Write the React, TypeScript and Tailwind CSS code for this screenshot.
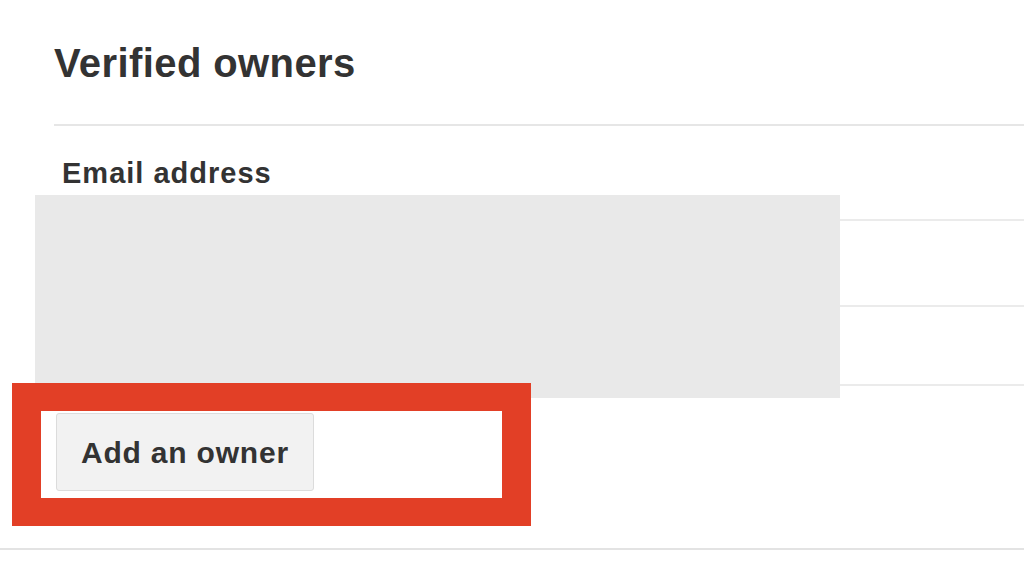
export default function App() {
  return (
    <div className="relative h-[561px] w-full overflow-hidden bg-white font-['Liberation_Sans',Arial,sans-serif] text-[#333]">
      <h1 className="pl-[54px] pt-[43px] text-[40px] leading-[40px] font-bold tracking-[0.4px]">Verified owners</h1>
      <div className="ml-[54px] mt-[41px] h-[2px] bg-[#e6e6e6]" />

      <div className="ml-[54px]">
        <div className="h-[95px] border-b-2 border-[#ebebeb] pl-[8px] pt-[33px]">
          <span className="text-[29px] leading-[29px] font-bold tracking-[1px]">Email address</span>
        </div>
        <div className="h-[86px] border-b-2 border-[#ebebeb]" />
        <div className="h-[79px] border-b-2 border-[#ebebeb]" />
      </div>

      {/* redacted rows */}
      <div className="absolute left-[35px] top-[195px] h-[203px] w-[805px] bg-[#e9e9e9]" />

      <div className="relative z-10 ml-[12px] -mt-[3px] h-[143px] w-[519px] border-x-[29px] border-y-[28px] border-[#e23f26] bg-white">
        <button className="ml-[15px] mt-[2px] flex h-[78px] w-[258px] items-center justify-center rounded-[3px] border border-[#dcdcdc] bg-[#f2f2f2] text-[30px] font-bold tracking-[0.8px] text-[#333]">
          Add an owner
        </button>
      </div>

      <div className="mt-[22px] h-[2px] bg-[#e3e3e3]" />
    </div>
  );
}
